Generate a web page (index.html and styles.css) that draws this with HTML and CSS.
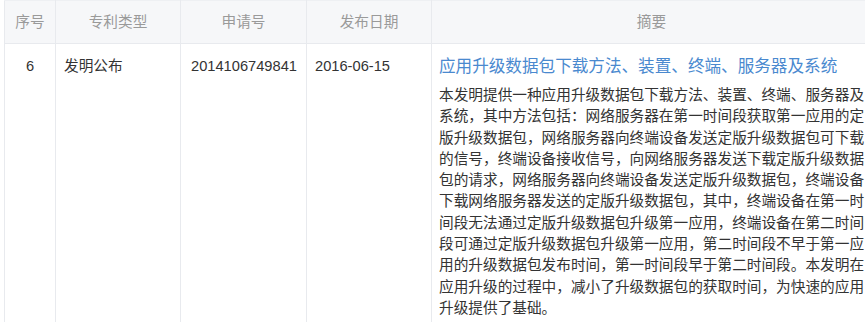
FILE: index.html
```html
<!DOCTYPE html>
<html lang="zh-CN">
<head>
<meta charset="utf-8">
<title>专利列表</title>
<link rel="stylesheet" href="styles.css">
</head>
<body>
<table class="patents">
  <colgroup>
    <col class="c-no">
    <col class="c-type">
    <col class="c-app">
    <col class="c-date">
    <col class="c-sum">
  </colgroup>
  <thead>
    <tr>
      <th>序号</th>
      <th>专利类型</th>
      <th>申请号</th>
      <th>发布日期</th>
      <th>摘要</th>
    </tr>
  </thead>
  <tbody>
    <tr>
      <td class="center">6</td>
      <td>发明公布</td>
      <td class="app">2014106749841</td>
      <td>2016-06-15</td>
      <td class="sum">
        <a class="title" href="#">应用升级数据包下载方法、装置、终端、服务器及系统</a>
        <p class="abstract">本发明提供一种应用升级数据包下载方法、装置、终端、服务器及系统，其中方法包括：网络服务器在第一时间段获取第一应用的定版升级数据包，网络服务器向终端设备发送定版升级数据包可下载的信号，终端设备接收信号，向网络服务器发送下载定版升级数据包的请求，网络服务器向终端设备发送定版升级数据包，终端设备下载网络服务器发送的定版升级数据包，其中，终端设备在第一时间段无法通过定版升级数据包升级第一应用，终端设备在第二时间段可通过定版升级数据包升级第一应用，第二时间段不早于第一应用的升级数据包发布时间，第一时间段早于第二时间段。本发明在应用升级的过程中，减小了升级数据包的获取时间，为快速的应用升级提供了基础。</p>
      </td>
    </tr>
  </tbody>
</table>
</body>
</html>
```
FILE: styles.css
```css
html, body {
  margin: 0;
  padding: 0;
  background: #ffffff;
  overflow: hidden;
}

body {
  font-family: "Liberation Sans", "Noto Sans CJK SC", sans-serif;
  font-size: 14.66px;
  color: #333333;
}

.patents {
  margin-left: 4px;
  border-collapse: collapse;
  table-layout: fixed;
  width: 867px;
}

.c-no { width: 51px; }
.c-type { width: 125px; }
.c-app { width: 126px; }
.c-date { width: 125px; }
.c-sum { width: 440px; }

.patents th {
  height: 42px;
  padding: 0;
  background: #f6f7f9;
  color: #9a9a9a;
  font-weight: normal;
  text-align: center;
  border: 1px solid #e8eaee;
  border-top-color: #eef0f3;
  line-height: 20px;
}

.patents td {
  vertical-align: top;
  padding: 12px 8px 0 8px;
  border-left: 1px solid #e8eaee;
  border-right: 1px solid #e8eaee;
  line-height: 21.3px;
  height: 266px;
}

.patents td.center {
  text-align: center;
  padding-left: 0;
  padding-right: 0;
}

.patents td.app {
  padding-left: 10px;
}

.patents td.sum {
  padding-left: 7px;
  padding-top: 0;
  height: 278px;
}

.title {
  display: block;
  margin-top: 11px;
  font-size: 16.6px;
  line-height: 24px;
  color: #4a89cf;
  text-decoration: none;
  white-space: nowrap;
}

.abstract {
  margin: 6px 0 0 0;
  width: 426px;
  font-size: 14.66px;
  line-height: 21.3px;
  color: #333333;
}
```
